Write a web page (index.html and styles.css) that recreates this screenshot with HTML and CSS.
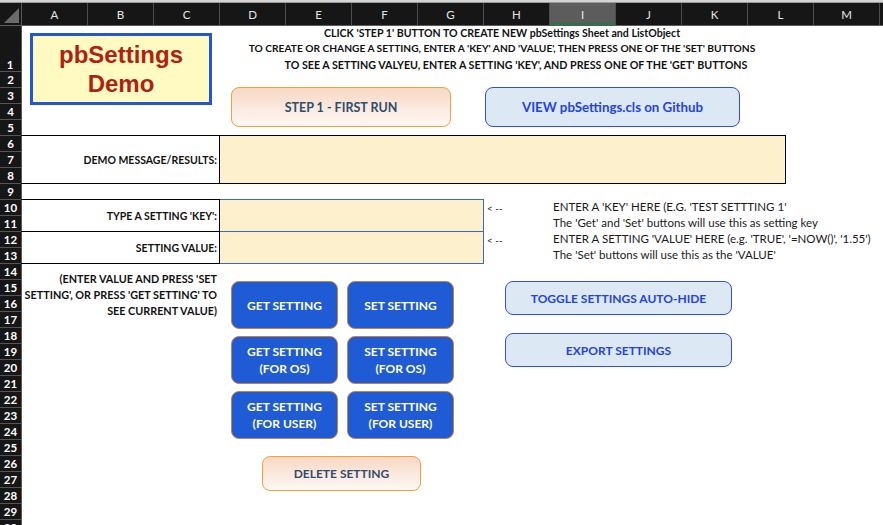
FILE: index.html
```html
<!DOCTYPE html>
<html lang="en">
<head>
<meta charset="utf-8">
<title>pbSettings Demo</title>
<link rel="stylesheet" href="styles.css">
</head>
<body>
<div class="app">
  <div class="topstrip"></div>
  <div class="colhdr">
    <div class="corner"><span class="tri"></span></div>
    <div class="col">A</div>
    <div class="col">B</div>
    <div class="col">C</div>
    <div class="col">D</div>
    <div class="col">E</div>
    <div class="col">F</div>
    <div class="col">G</div>
    <div class="col">H</div>
    <div class="col sel">I</div>
    <div class="col">J</div>
    <div class="col">K</div>
    <div class="col">L</div>
    <div class="col">M</div>
    <div class="col rest"></div>
  </div>
  <div class="main">
    <div class="rowhdr">
      <div class="rn r1">1</div>
      <div class="rn">2</div><div class="rn">3</div><div class="rn">4</div><div class="rn">5</div>
      <div class="rn">6</div><div class="rn">7</div><div class="rn">8</div><div class="rn">9</div>
      <div class="rn">10</div><div class="rn">11</div><div class="rn">12</div><div class="rn">13</div>
      <div class="rn">14</div><div class="rn">15</div><div class="rn">16</div><div class="rn">17</div>
      <div class="rn">18</div><div class="rn">19</div><div class="rn">20</div><div class="rn">21</div>
      <div class="rn">22</div><div class="rn">23</div><div class="rn">24</div><div class="rn">25</div>
      <div class="rn">26</div><div class="rn">27</div><div class="rn">28</div><div class="rn">29</div>
      <div class="rn">30</div>
    </div>
    <div class="sheet">
      <div class="title-box">pbSettings<br>Demo</div>

      <div class="instructions">
        <p>CLICK 'STEP 1' BUTTON TO CREATE NEW pbSettings Sheet and ListObject</p>
        <p>TO CREATE OR CHANGE A SETTING, ENTER A 'KEY' AND 'VALUE', THEN PRESS ONE OF THE 'SET' BUTTONS</p>
        <p class="shift">TO SEE A SETTING VALYEU, ENTER A SETTING 'KEY', AND PRESS ONE OF THE 'GET' BUTTONS</p>
      </div>

      <div class="top-buttons">
        <div class="btn peach step">STEP 1 - FIRST RUN</div>
        <div class="btn light view">VIEW pbSettings.cls on Github</div>
      </div>

      <div class="demo-row">
        <div class="label">DEMO MESSAGE/RESULTS:</div>
        <div class="field"></div>
      </div>

      <div class="kv">
        <div class="kv-row">
          <div class="label">TYPE A SETTING 'KEY':</div>
          <div class="field"></div>
          <div class="arrow">&lt; --</div>
          <div class="note">
            <div>ENTER A 'KEY' HERE (E.G. 'TEST SETTTING 1'</div>
            <div>The 'Get' and 'Set' buttons will use this as setting key</div>
          </div>
        </div>
        <div class="kv-row">
          <div class="label">SETTING VALUE:</div>
          <div class="field"></div>
          <div class="arrow">&lt; --</div>
          <div class="note">
            <div>ENTER A SETTING 'VALUE' HERE (e.g. 'TRUE', '=NOW()', '1.55')</div>
            <div>The 'Set' buttons will use this as the 'VALUE'</div>
          </div>
        </div>
      </div>

      <div class="lower">
        <div class="hint">(ENTER VALUE AND PRESS 'SET<br>SETTING', OR PRESS 'GET SETTING' TO<br>SEE CURRENT VALUE)</div>
        <div class="actions">
          <div class="blue-grid">
            <div class="btn blue">GET SETTING</div>
            <div class="btn blue">SET SETTING</div>
            <div class="btn blue">GET SETTING<br>(FOR OS)</div>
            <div class="btn blue">SET SETTING<br>(FOR OS)</div>
            <div class="btn blue">GET SETTING<br>(FOR USER)</div>
            <div class="btn blue">SET SETTING<br>(FOR USER)</div>
          </div>
          <div class="btn peach delete">DELETE SETTING</div>
        </div>
        <div class="side">
          <div class="btn light wide">TOGGLE SETTINGS AUTO-HIDE</div>
          <div class="btn light wide">EXPORT SETTINGS</div>
        </div>
      </div>
    </div>
  </div>
</div>
</body>
</html>
```

FILE: styles.css
```css
* { box-sizing: border-box; }

html, body {
  margin: 0;
  padding: 0;
  background: #ffffff;
}

body {
  width: 883px;
  height: 525px;
  overflow: hidden;
  font-family: "Lato", "Open Sans", sans-serif;
  color: #111;
}

.app {
  width: 883px;
  height: 525px;
  overflow: hidden;
  display: flex;
  flex-direction: column;
}

.topstrip {
  height: 3px;
  flex: none;
  background: #d4d4d4;
  border-bottom: 1px solid #9a9a9a;
}

/* column header */
.colhdr {
  height: 23px;
  flex: none;
  display: flex;
  background: #161616;
  border-bottom: 1px solid #5a5a5a;
}

.corner {
  width: 22px;
  flex: none;
  border-right: 1px solid #5a5a5a;
  display: flex;
  align-items: flex-end;
  justify-content: flex-end;
  padding: 0 2px 2px 0;
}

.tri {
  width: 0;
  height: 0;
  border-left: 15px solid transparent;
  border-bottom: 15px solid #6a6a6a;
}

.col {
  width: 66px;
  flex: none;
  border-right: 1px solid #4c4c4c;
  color: #e6e6e6;
  font-size: 11.5px;
  display: flex;
  align-items: center;
  justify-content: center;
  padding-top: 1px;
}

.col.sel {
  background: #5c5c5c;
  border-bottom: 2px solid #1f7a46;
  padding-top: 3px;
}

.col.rest {
  flex: 1;
  width: auto;
  border-right: none;
}

/* body */
.main {
  flex: 1;
  display: flex;
  min-height: 0;
}

.rowhdr {
  width: 22px;
  flex: none;
  background: #161616;
  border-right: 1px solid #5a5a5a;
  display: flex;
  flex-direction: column;
  overflow: hidden;
}

.rn {
  height: 16px;
  flex: none;
  color: #ffffff;
  font-weight: 700;
  font-size: 11.5px;
  text-align: center;
  line-height: 15px;
  border-bottom: 1px solid #555;
}

.rn.r1 {
  height: 46px;
  line-height: 15px;
  padding-top: 31px;
  padding-right: 1px;
}

.sheet {
  flex: 1;
  display: grid;
  grid-template-columns: repeat(13, 66px) 1fr;
  grid-template-rows: 46px repeat(29, 16px);
  overflow: hidden;
  margin-left: -1px;
}

/* title */
.title-box {
  grid-column: 1 / 4;
  grid-row: 1 / 5;
  align-self: start;
  margin: 7px 0 0 9px;
  width: 182px;
  height: 72px;
  border: 3px solid #2356d6;
  background: #fff9c2;
  color: #b1210f;
  font-family: "Liberation Sans", Arial, sans-serif;
  font-weight: 700;
  font-size: 24px;
  line-height: 29px;
  display: flex;
  align-items: center;
  justify-content: center;
  text-align: center;
}

/* instructions */
.instructions {
  grid-column: 4 / -1;
  grid-row: 1 / 2;
  width: 566px;
  align-self: end;
  font-weight: 700;
  font-size: 10.2px;
  line-height: 15.5px;
  text-align: center;
  color: #111;
}

.instructions p {
  margin: 0;
  white-space: nowrap;
}

.instructions p:first-child {
  font-size: 10.6px;
}

.instructions p.shift {
  padding-left: 28px;
  font-size: 10.7px;
}

/* buttons */
.btn {
  display: flex;
  align-items: center;
  justify-content: center;
  text-align: center;
  font-weight: 700;
  white-space: nowrap;
}

.peach {
  border: 1px solid #f0a03c;
  border-radius: 8px;
  background: linear-gradient(to bottom, #f8d8c4 0%, #fbeae0 55%, #fef8f4 100%);
  color: #2f4c6c;
  font-size: 12px;
}

.light {
  border: 1px solid #2f4ee8;
  border-radius: 8px;
  background: #dde8f5;
  color: #2242e6;
  font-size: 12px;
}

.blue {
  border: 1px solid #d0803e;
  border-radius: 8px;
  background: #1f5bd5;
  color: #ffffff;
  font-size: 12px;
  line-height: 17px;
}

.top-buttons {
  grid-column: 4 / -1;
  grid-row: 2 / 6;
  display: flex;
  align-items: flex-start;
  gap: 34px;
  padding: 15px 0 0 12px;
}

.step {
  width: 220px;
  height: 40px;
  font-size: 12.5px;
}

.view {
  width: 255px;
  height: 40px;
  font-size: 13.3px;
}

/* demo message row */
.label {
  font-weight: 700;
  font-size: 10.5px;
  text-align: right;
  display: flex;
  align-items: center;
  justify-content: flex-end;
  padding-right: 2px;
  white-space: nowrap;
}

.demo-row {
  grid-column: 1 / -1;
  grid-row: 6 / 9;
  margin-top: -1px;
  height: 49px;
  display: flex;
}

.demo-row .label {
  width: 199px;
  border-top: 1px solid #000;
  border-bottom: 1px solid #000;
  border-right: 1px solid #000;
}

.demo-row .field {
  width: 566px;
  background: #fdf1cd;
  border-top: 1px solid #000;
  border-bottom: 1px solid #000;
  border-right: 1px solid #000;
}

/* key/value rows */
.kv {
  grid-column: 1 / -1;
  grid-row: 10 / 14;
  margin-top: -1px;
  display: flex;
  flex-direction: column;
}

.kv-row {
  height: 33px;
  display: flex;
}

.kv-row + .kv-row {
  margin-top: -1px;
}

.kv-row .label {
  width: 199px;
  border-top: 1px solid #000;
  border-bottom: 1px solid #000;
  border-right: 1px solid #000;
}

.kv-row .field {
  width: 264px;
  background: #fdf1cd;
  border-top: 1px solid #3b6cb2;
  border-bottom: 1px solid #3b6cb2;
  border-right: 1px solid #3b6cb2;
}

.arrow {
  width: 69px;
  padding: 1px 0 0 3px;
  font-size: 10px;
  line-height: 16px;
  color: #222;
}

.note {
  font-size: 11.5px;
  line-height: 16px;
  color: #1a1a1a;
  white-space: nowrap;
  padding-top: 0;
}

/* lower area */
.lower {
  grid-column: 1 / -1;
  grid-row: 14 / -1;
  display: flex;
  align-items: flex-start;
}

.hint {
  width: 198px;
  flex: none;
  padding: 7px 2px 0 0;
  text-align: right;
  font-weight: 700;
  font-size: 10.8px;
  line-height: 16px;
  white-space: nowrap;
}

.actions {
  flex: none;
  margin-left: 12px;
  padding-top: 17px;
  display: flex;
  flex-direction: column;
}

.blue-grid {
  display: grid;
  grid-template-columns: 107px 107px;
  grid-auto-rows: 48px;
  column-gap: 9px;
  row-gap: 7px;
}

.delete {
  margin: 17px 0 0 31px;
  width: 159px;
  height: 35px;
}

.side {
  flex: none;
  margin-left: 51px;
  padding-top: 17px;
  display: flex;
  flex-direction: column;
  gap: 18px;
}

.wide {
  width: 227px;
  height: 34px;
}
```
